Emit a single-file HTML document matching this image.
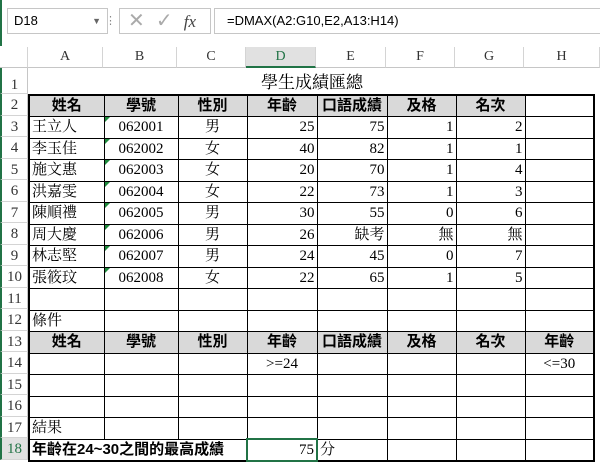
<!DOCTYPE html>
<html><head><meta charset="utf-8"><style>
*{margin:0;padding:0;box-sizing:border-box}
body{width:600px;height:461px;background:#fff;font-family:"Liberation Serif","Noto Serif CJK SC","Noto Sans CJK TC",serif;font-size:14px;position:relative;overflow:hidden}
.top{position:absolute;left:0;top:0;width:600px;height:46px;background:#fff;border-left:2px solid #217346}
.box{position:absolute;top:8px;height:26px;border:1px solid #c6c6c6;background:#fff;font-family:"Liberation Sans",sans-serif;font-size:13px;line-height:24px}
.ch{position:absolute;top:47px;height:21px;background:#fff;border-right:1px solid #d4d4d4;border-bottom:1px solid #c6c6c6;text-align:center;font-size:14px;line-height:20px;color:#333}
.rh{position:absolute;left:0;width:28px;border-bottom:1px solid #d4d4d4;border-right:1px solid #c6c6c6;text-align:center;font-size:15px;color:#333;border-left:2px solid #217346}
table{position:absolute;left:28px;top:94px;border-collapse:collapse;table-layout:fixed}
td{border:1px solid #000;height:21.5px;padding:0 2px;font-size:15px;white-space:nowrap;overflow:hidden;line-height:18px}
.h td{background:#d9d9d9;font-weight:bold;text-align:center;font-family:"Liberation Sans","Noto Sans CJK TC",sans-serif}
.r{text-align:right}.c{text-align:center}
td.g{position:relative}
td.g:before{content:"";position:absolute;left:0;top:0;border-top:5px solid #1e8a3c;border-right:5px solid transparent}
</style></head><body>
<div class="top">
<div class="box" style="left:5px;width:101px;padding-left:6px">D18<span style="position:absolute;right:6px;font-size:9px;color:#666">▼</span></div>
<div style="position:absolute;left:103px;top:14px;color:#888;font-size:11px">⋮</div>
<div class="box" style="left:117px;width:92px;color:#aaa;font-size:20px;padding-left:8px">✕&nbsp;&nbsp;✓&nbsp;&nbsp;<i style="color:#444;font-family:'Liberation Serif';font-size:17px">fx</i></div>
<div class="box" style="left:212px;width:400px;padding-left:12px">=DMAX(A2:G10,E2,A13:H14)</div>
</div>
<div class="ch" style="left:0;width:28px;background:#fff"></div>
<div class="ch" style="left:28px;width:75px">A</div>
<div class="ch" style="left:103px;width:74px">B</div>
<div class="ch" style="left:177px;width:69px">C</div>
<div class="ch" style="left:246px;width:70px;background:#e1e1e1;border-bottom:2px solid #217346;color:#217346">D</div>
<div class="ch" style="left:316px;width:70px">E</div>
<div class="ch" style="left:386px;width:69px">F</div>
<div class="ch" style="left:455px;width:69px">G</div>
<div class="ch" style="left:524px;width:76px">H</div>
<div class="rh" style="top:68px;height:26px;line-height:34px">1</div>
<script>
var s='';for(var i=2;i<=18;i++){var t=94+(i-2)*21.5;s+='<div class="rh" style="top:'+t+'px;height:21.5px;line-height:22px;'+(i==18?'background:#e1e1e1;color:#217346':'')+'">'+i+'</div>';}document.write(s);
</script>
<div style="position:absolute;left:28px;top:68px;width:568px;height:26px;text-align:center;font-size:17px;line-height:30px">學生成績匯總</div>
<table style="border:2px solid #000">
<colgroup><col style="width:75px"><col style="width:74px"><col style="width:69px"><col style="width:70px"><col style="width:70px"><col style="width:69px"><col style="width:69px"><col style="width:69px"></colgroup>
<tr class="h"><td>姓名</td><td>學號</td><td>性別</td><td>年齡</td><td>口語成績</td><td>及格</td><td>名次</td><td style="background:#fff"></td></tr>
<tr><td>王立人</td><td class="c g">062001</td><td class="c">男</td><td class="r">25</td><td class="r">75</td><td class="r">1</td><td class="r">2</td><td></td></tr>
<tr><td>李玉佳</td><td class="c g">062002</td><td class="c">女</td><td class="r">40</td><td class="r">82</td><td class="r">1</td><td class="r">1</td><td></td></tr>
<tr><td>施文惠</td><td class="c g">062003</td><td class="c">女</td><td class="r">20</td><td class="r">70</td><td class="r">1</td><td class="r">4</td><td></td></tr>
<tr><td>洪嘉雯</td><td class="c g">062004</td><td class="c">女</td><td class="r">22</td><td class="r">73</td><td class="r">1</td><td class="r">3</td><td></td></tr>
<tr><td>陳順禮</td><td class="c g">062005</td><td class="c">男</td><td class="r">30</td><td class="r">55</td><td class="r">0</td><td class="r">6</td><td></td></tr>
<tr><td>周大慶</td><td class="c g">062006</td><td class="c">男</td><td class="r">26</td><td class="r">缺考</td><td class="r">無</td><td class="r">無</td><td></td></tr>
<tr><td>林志堅</td><td class="c g">062007</td><td class="c">男</td><td class="r">24</td><td class="r">45</td><td class="r">0</td><td class="r">7</td><td></td></tr>
<tr><td>張筱玟</td><td class="c g">062008</td><td class="c">女</td><td class="r">22</td><td class="r">65</td><td class="r">1</td><td class="r">5</td><td></td></tr>
<tr><td></td><td></td><td></td><td></td><td></td><td></td><td></td><td></td></tr>
<tr><td>條件</td><td></td><td></td><td></td><td></td><td></td><td></td><td></td></tr>
<tr class="h"><td>姓名</td><td>學號</td><td>性別</td><td>年齡</td><td>口語成績</td><td>及格</td><td>名次</td><td>年齡</td></tr>
<tr><td></td><td></td><td></td><td class="c">&gt;=24</td><td></td><td></td><td></td><td class="c">&lt;=30</td></tr>
<tr><td></td><td></td><td></td><td></td><td></td><td></td><td></td><td></td></tr>
<tr><td></td><td></td><td></td><td></td><td></td><td></td><td></td><td></td></tr>
<tr><td>結果</td><td></td><td></td><td></td><td></td><td></td><td></td><td></td></tr>
<tr><td colspan="3" style="font-weight:bold;font-family:'Liberation Sans','Noto Sans CJK TC',sans-serif;background:#fff">年齡在24~30之間的最高成績</td><td class="r" style="border:2px solid #217346">75</td><td>分</td><td></td><td></td><td></td></tr>
</table>
</body></html>
